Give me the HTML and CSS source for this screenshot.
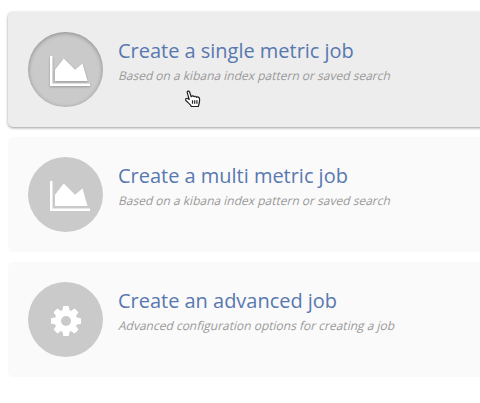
FILE: index.html
```html
<!DOCTYPE html>
<html lang="en">
<head>
<meta charset="utf-8">
<title>Create a job</title>
<link rel="stylesheet" href="styles.css">
</head>
<body>
<svg width="0" height="0" class="defs">
  <symbol id="area" viewBox="0 0 2048 1536"><path d="M2048 1408v128H0V0h128v1408zM1664 384l256 896H256V704l448-576 576 576z"/></symbol>
  <symbol id="cog" viewBox="0 0 1536 1536"><path d="M1024 768q0-106-75-181t-181-75-181 75-75 181 75 181 181 75 181-75 75-181zm512-109v222q0 12-8 23t-20 13l-185 28q-19 54-39 91 35 50 107 138 10 12 10 25t-9 23q-27 37-99 108t-94 71q-12 0-26-9l-138-108q-44 23-91 38-16 136-29 186-7 28-36 28H657q-14 0-24.500-8.500T621 1506l-28-184q-49-16-90-37l-141 107q-10 9-25 9-14 0-25-11-126-114-165-168-7-10-7-23 0-12 8-23 15-21 51-66.500t54-70.500q-27-50-41-99L29 913q-13-2-21-12.500T0 877V655q0-12 8-23t19-13l186-28q14-46 39-92-40-57-107-138-10-12-10-24 0-10 9-23 26-36 98.500-107.500T337 135q13 0 26 10l138 107q44-23 91-38 16-136 29-186 7-28 36-28h222q14 0 24.500 8.500T915 30l28 184q49 16 90 37l142-107q9-9 24-9 13 0 25 10 129 119 165 170 7 8 7 22 0 12-8 23-15 21-51 66.500t-54 70.500q26 50 41 98l183 28q13 2 21 12.500t8 23.500z"/></symbol>
</svg>
<main class="jobs">
  <a class="card hover">
    <span class="circle"><svg class="area"><use href="#area"/></svg></span>
    <div class="text"><h2>Create a single metric job</h2><p>Based on a kibana index pattern or saved search</p></div>
    <svg class="pointer" viewBox="0 0 16 18"><path d="M4.200 9.500 2.300 2.800C1.800 1 4 .4 4.600 2L6.200 6.700C7 5.500 8.600 5.700 8.900 6.700 9.800 5.900 11.300 6.200 11.500 7.300 12.700 6.600 14.300 7.100 14.500 8.600 15 11.500 14.200 13.500 13.300 16.500H6.300C5.500 14.200 3 12.800 1 10.600-.1 8.900 1.600 7.800 2.800 8.500z"/><path d="M7.500 10.300v3.500M9.700 10.300v3.500M11.900 10.300v3.500"/></svg>
  </a>
  <a class="card">
    <span class="circle"><svg class="area"><use href="#area"/></svg></span>
    <div class="text"><h2>Create a multi metric job</h2><p>Based on a kibana index pattern or saved search</p></div>
  </a>
  <a class="card">
    <span class="circle"><svg class="cog"><use href="#cog"/></svg></span>
    <div class="text"><h2>Create an advanced job</h2><p>Advanced configuration options for creating a job</p></div>
  </a>
</main>
</body>
</html>
```
FILE: styles.css
```css
body {
  margin: 0;
  background: #fff;
  font-family: "Open Sans", sans-serif;
  overflow: hidden;
}
.defs { position: absolute; }
.jobs {
  display: flex;
  flex-direction: column;
  gap: 10px;
  padding: 12px 0 0 8px;
}
.card {
  position: relative;
  box-sizing: border-box;
  display: flex;
  gap: 15px;
  height: 115px;
  margin-right: -8px;
  padding: 20px;
  border-radius: 5px;
  background: #fafafa;
}
.hover {
  background: #ededed;
  box-shadow: 0 1px 3px rgba(0, 0, 0, .4);
}
.circle {
  flex: none;
  box-sizing: border-box;
  width: 75px;
  height: 75px;
  border-radius: 50%;
  background: #cacaca;
  fill: #fff;
}
.hover .circle { box-shadow: inset 0 1px 4px rgba(0, 0, 0, .32); }
.hover .area { filter: drop-shadow(0 1px 1px rgba(0, 0, 0, .25)); }
.circle svg { display: block; overflow: visible; }
.area { width: 40px; height: 30px; margin: 23.500px 0 0 22px; }
.cog { width: 30px; height: 30px; margin: 23.500px 0 0 23px; }
.text { white-space: nowrap; padding-top: 5px; }
h2 {
  margin: 0;
  font-size: 20px;
  line-height: 28px;
  font-weight: 400;
  letter-spacing: -.02px;
  color: #5878b0;
}
/* the regular face is slanted, which keeps its upright letter widths */
p {
  width: max-content;
  margin: 3px 0 0 .6px;
  font-size: 12px;
  line-height: 16px;
  transform: skewX(-14deg);
  color: #999;
}
.pointer {
  position: absolute;
  left: 177px;
  top: 78px;
  width: 16px;
  height: 18px;
  fill: #fff;
  stroke: #222;
  stroke-width: 1.200;
  stroke-linejoin: round;
}
```
